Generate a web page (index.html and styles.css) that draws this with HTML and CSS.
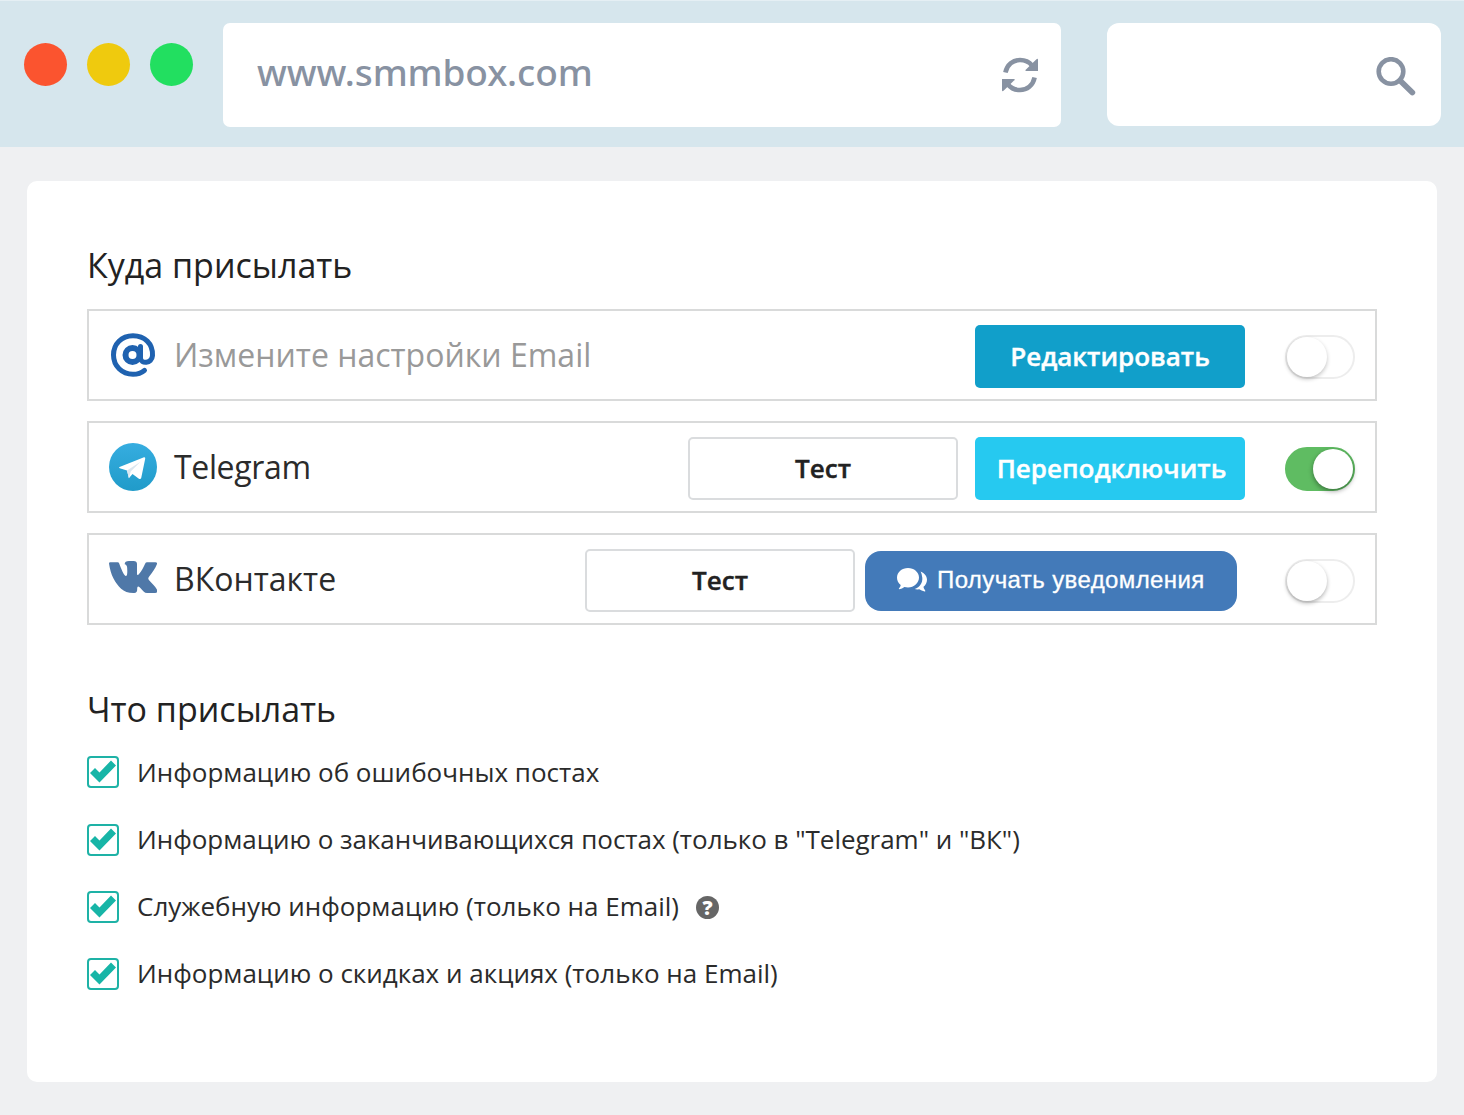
FILE: index.html
```html
<!DOCTYPE html>
<html lang="ru">
<head>
<meta charset="utf-8">
<title>SmmBox</title>
<link rel="stylesheet" href="styles.css">
</head>
<body>
<header class="browser-bar">
  <div class="window-controls"><i class="dot red"></i><i class="dot yellow"></i><i class="dot green"></i></div>
  <div class="address">
    <span class="address-text">www.smmbox.com</span>
    <svg class="refresh" viewBox="0 0 36 36"><g fill="none" stroke="#8892a2" stroke-width="4.600"><path d="M3.400 15.500C5 7.500 11 3 18 3c5 0 9.200 2 12 5.500"/><path d="M32.600 20.500C31 28.500 25 33 18 33c-5 0-9.200-2-12-5.500"/></g><path fill="#8892a2" d="M34.200 2.500q1.800-1.700 1.800.5v11H24q-1.500-.5 0-1.600zM1.800 33.500Q0 35.200 0 33V22h12q1.500.5 0 1.600z"/></svg>
  </div>
  <div class="search">
    <svg class="search-icon" viewBox="0 0 40 40" fill="none" stroke="#8892a2"><circle cx="15" cy="14.500" r="12.300" stroke-width="4.600"/><path d="M24 23.500l12.300 12" stroke-width="5.800" stroke-linecap="round"/></svg>
  </div>
</header>
<main class="panel">
  <h2 class="heading">Куда присылать</h2>
  <section class="channels">
    <div class="channel">
      <svg class="logo" viewBox="0 0 48 48" fill="none" stroke="#1f62b0"><circle cx="23.500" cy="24" r="7" stroke-width="6"/><path d="M31.500 15.500v11.500c0 6.300 11.500 6 12-2.500C44 12.500 35.500 4.800 24 4.800S4.500 13 4.500 24 13 43.300 24 43.300c4.700 0 8.500-1.400 11.500-4" stroke-width="5" stroke-linecap="round"/></svg>
      <span class="name muted">Измените настройки Email</span>
      <button class="btn edit">Редактировать</button>
      <span class="toggle faint"></span>
    </div>
    <div class="channel">
      <svg class="logo" viewBox="0 0 48 48"><defs><linearGradient id="sky" x1="0" y1="0" x2="0" y2="1"><stop offset="0" stop-color="#36ade0"/><stop offset="1" stop-color="#209bc9"/></linearGradient></defs><circle cx="24" cy="24" r="24" fill="url(#sky)"/><path fill="#fff" d="M10.500 24L35 14.200q1.500-.4 1.200 1.500L32.200 35q-.6 1.700-2.300.7L23.500 31l-3.600 4.200-1.900-7.700-7.300-2.300q-1.300-.6-.2-1.200z"/><path fill="#dbe6ef" d="M18 27.500l13.500-8.700-9.800 9.700-1.800 6.700z"/></svg>
      <span class="name name-telegram">Telegram</span>
      <button class="btn test">Тест</button>
      <button class="btn reconnect">Переподключить</button>
      <span class="toggle on"></span>
    </div>
    <div class="channel">
      <svg class="logo" viewBox="0 0 48 48"><path fill="#4f78a8" d="M0 8.500Q0 7.300 1.200 7.300H8.600q1.200 0 1.600 1.200C12.500 14.500 14.300 19 16.300 20.700c1.700 1 2-1 2-4.700 0-4-.2-6-2.600-6.700Q15.500 6 20 6h4.500q3.500 0 3.500 3v9.500c.2 2 1 1.800 2 .5 2.600-3 4.400-6.500 6.100-10.300q.6-1.400 2.100-1.400h8.200q2 0 1.600 1.700c-1.500 4.500-5 8.700-8 12.800-1 1.400-1 2.200.1 3.500 2.600 2.900 6 6 7.800 9.300q1.200 3.400-1.800 3.400h-8q-2 0-3.500-1.500l-3.700-3.900c-2-1.800-2.700-1.200-2.700 1.700q0 3.700-3 3.800C14 38.400 9 31.500 4.500 23.500 2.300 19.300.8 14 0 8.500z"/></svg>
      <span class="name">ВКонтакте</span>
      <button class="btn test test-vk">Тест</button>
      <button class="notify"><svg class="chat" viewBox="0 0 30 25" fill="#fff"><path d="M11 0C17 0 22 4.200 22 9.500S17 19.500 11 19.500q-2 0-3.600-.4-2.200 1.900-5.200 2.100-1-.3.300-1.400 1-1.300 1.200-2.700C1.300 15.200 0 12.500 0 9.700 0 4.200 5 0 11 0z"/><path d="M23.600 3.500c4 1.700 6.400 4.800 6.400 8.300 0 2.800-1.500 5.400-3.500 7 .2 1.700.8 2.500 1.700 3.700q.6 1-.6.900-3.200-.5-5.300-2.100-2.500.4-4.600-.2c5.300-2 8-6.300 7.600-11.400q-.3-3.600-1.700-6.200z"/></svg><span>Получать уведомления</span></button>
      <span class="toggle"></span>
    </div>
  </section>
  <h2 class="heading heading-what">Что присылать</h2>
  <section class="options">
    <label class="option"><span class="check"><svg viewBox="0 0 28 28"><path d="M1 15l5-5 4.500 4.500L22 2.500l5 5L10.500 24.500z"/></svg></span><span class="label">Информацию об ошибочных постах</span></label>
    <label class="option"><span class="check"><svg viewBox="0 0 28 28"><path d="M1 15l5-5 4.500 4.500L22 2.500l5 5L10.500 24.500z"/></svg></span><span class="label label-long">Информацию о заканчивающихся постах (только в "Telegram" и "ВК")</span></label>
    <label class="option"><span class="check"><svg viewBox="0 0 28 28"><path d="M1 15l5-5 4.500 4.500L22 2.500l5 5L10.500 24.500z"/></svg></span><span class="label">Служебную информацию (только на Email)</span><b class="help">?</b></label>
    <label class="option"><span class="check"><svg viewBox="0 0 28 28"><path d="M1 15l5-5 4.500 4.500L22 2.500l5 5L10.500 24.500z"/></svg></span><span class="label">Информацию о скидках и акциях (только на Email)</span></label>
  </section>
</main>
</body>
</html>
```
FILE: styles.css
```css
* { box-sizing: border-box; }
body { margin: 0; height: 1115px; overflow: hidden; background: #eff0f2; font-family: "Open Sans", sans-serif; color: #2b2b2b; }
svg { display: block; flex: none; }
button { margin: 0; padding: 0; }
.browser-bar { height: 147px; display: flex; align-items: flex-start; padding: 22px 23px 0 24px; background: #d6e6ed; border-top: 1px solid #e5eff4; }
.window-controls { display: flex; gap: 20px; width: 199px; padding-top: 20px; }
.dot { width: 43px; height: 43px; border-radius: 50%; }
.red { background: #fb542f; }
.yellow { background: #efca0e; }
.green { background: #22df60; }
.address { width: 838px; height: 104px; border-radius: 7px; background: #fff; display: flex; justify-content: space-between; padding: 0 23px 0 34px; }
.address-text { font-family: "Noto Sans", sans-serif; font-weight: 500; font-size: 37px; letter-spacing: -0.1px; line-height: 97px; color: #8892a2; white-space: nowrap; }
.refresh { width: 36px; height: 36px; margin-top: 34px; }
.search { width: 334px; height: 103px; margin-left: 46px; border-radius: 12px; background: #fff; display: flex; justify-content: flex-end; padding: 34px 25px 0 0; }
.search-icon { width: 40px; height: 40px; }
.panel { margin: 34px 27px 0; height: 901px; padding: 60px; border-radius: 10px; background: #fff; }
.heading { margin: 0; height: 68px; font-weight: 400; font-size: 34px; line-height: 49px; color: #222; white-space: nowrap; }
.channels { display: grid; gap: 20px; }
.channel { height: 92px; border: 2px solid #d9dada; display: flex; align-items: center; padding: 0 20px; }
.logo { width: 48px; height: 48px; }
.name { margin-left: 17px; margin-right: auto; font-size: 32px; line-height: 44px; white-space: nowrap; }
.name-telegram { letter-spacing: -0.35px; }
.muted { color: #999; }
.btn { width: 270px; height: 63px; margin-top: 2px; border: 0; border-radius: 5px; font: 600 26px/61px "Open Sans", sans-serif; -webkit-text-stroke: 0.4px; color: #fff; white-space: nowrap; }
.edit { background: #119fca; }
.reconnect { background: #26c9f0; padding-left: 3px; }
.test { margin-right: 17px; background: #fff; border: 2px solid #dadcde; color: #222; line-height: 57px; }
.test-vk { margin-right: 10px; }
.notify { width: 372px; height: 60px; margin: 4px 8px 0 0; border: 0; border-radius: 16px; background: #437ab9; color: #fff; font: 24px/60px "Liberation Sans", sans-serif; display: flex; gap: 10px; padding-left: 32px; white-space: nowrap; }
.notify span { line-height: 58px; letter-spacing: 0.4px; -webkit-text-stroke: 0.3px; }
.chat { width: 30px; height: 25px; margin-top: 17px; }
.toggle { width: 70px; height: 44px; margin: 4px 0 0 40px; border-radius: 22px; background: #fff; border: 2px solid #ededed; display: flex; }
.toggle::before { content: ""; width: 40px; height: 40px; border-radius: 50%; background: #fff; box-shadow: 0 2px 4px rgba(0,0,0,.3); }
.faint::before { box-shadow: 0 2px 4px rgba(0,0,0,.24); }
.on { background: #5fbc62; border-color: #5fbc62; justify-content: flex-end; }
.on::before { box-shadow: 0 2px 5px rgba(0,0,0,.4); }
.heading-what { margin-top: 60px; height: 71px; }
.options { display: grid; grid-template-rows: 33px 32px 32px 32px; gap: 35px; }
.option { height: 32px; display: flex; align-items: center; font-size: 26px; line-height: 36px; white-space: nowrap; }
.label { margin-top: -2px; }
.option:first-child .label { margin-top: 0; }
.label-long { letter-spacing: -0.03px; }
.check { width: 32px; height: 32px; margin-right: 18px; border: 2px solid #1eb2a6; border-radius: 4px; flex: none; }
.check svg { width: 28px; height: 28px; fill: #17b5a7; }
.help { width: 23px; height: 23px; margin-left: 17px; border-radius: 50%; background: #666; color: #fff; font-size: 20px; line-height: 23px; text-align: center; font-weight: 800; }
```
